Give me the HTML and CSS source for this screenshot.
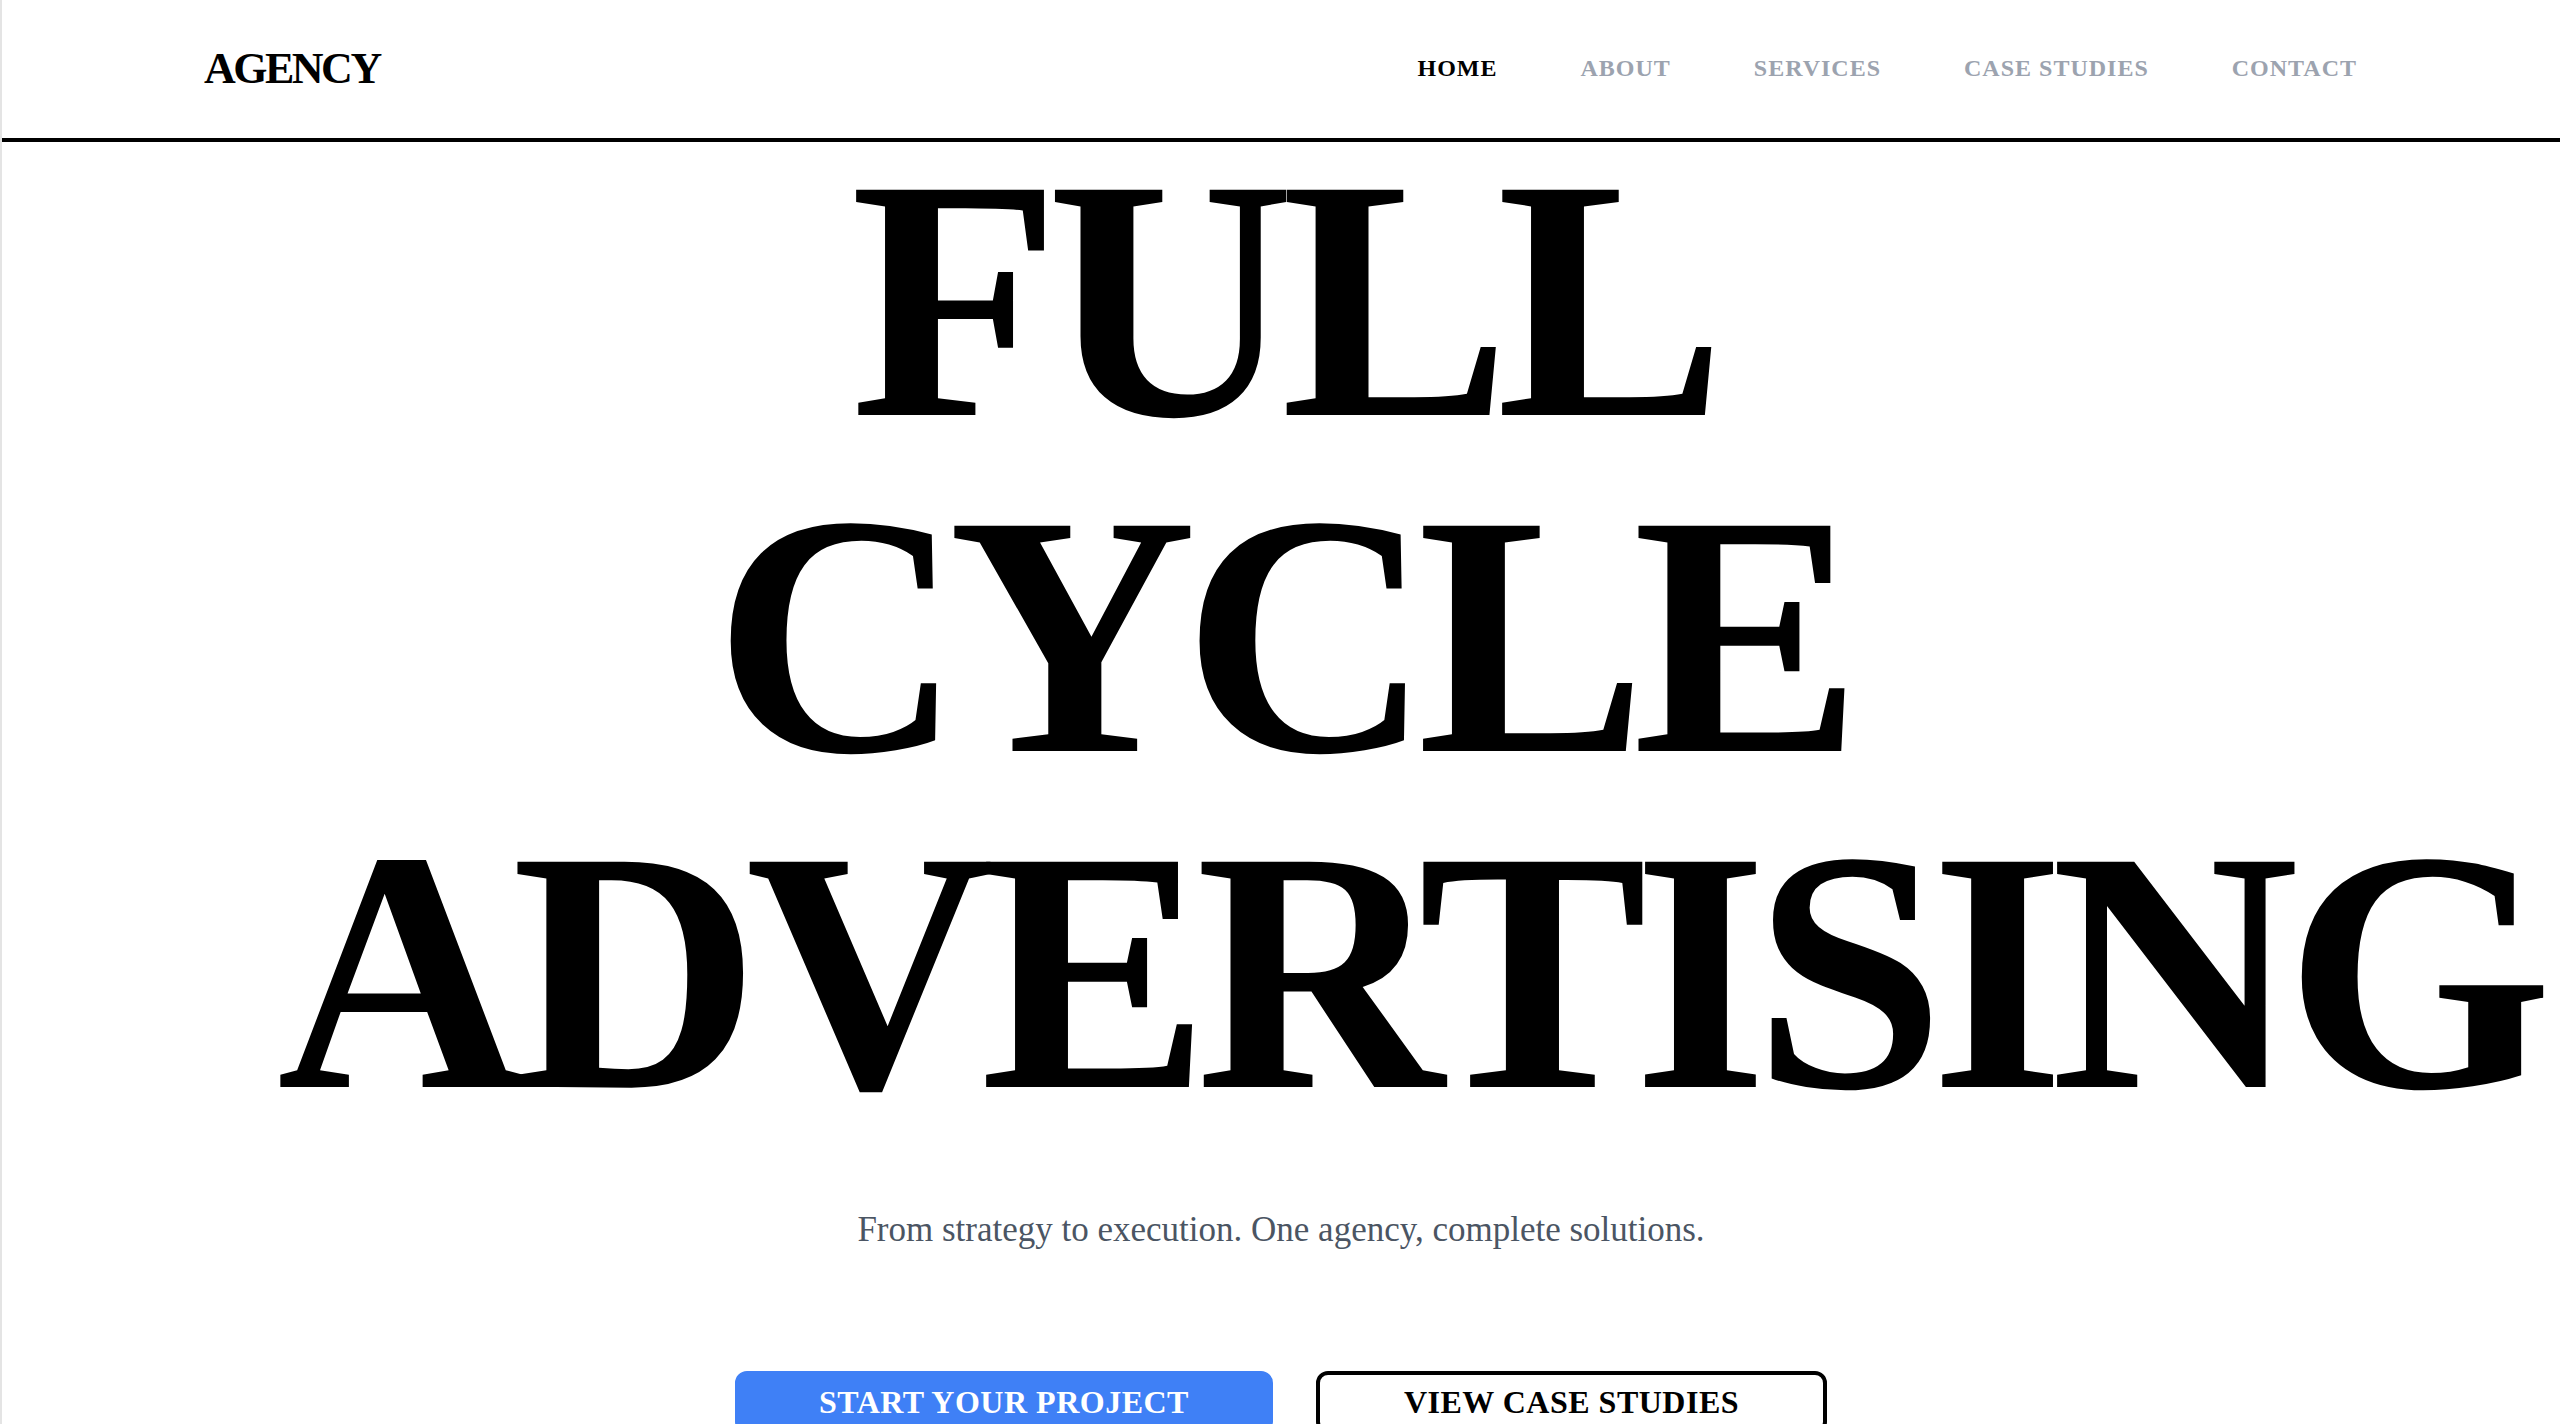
FILE: index.html
```html
<!DOCTYPE html>
<html lang="en">
<head>
<meta charset="utf-8">
<title>Agency</title>
<link rel="stylesheet" href="styles.css">
</head>
<body>
  <header class="site-header">
    <div class="logo">AGENCY</div>
    <nav class="main-nav">
      <a href="#" class="nav-link active">HOME</a>
      <a href="#" class="nav-link">ABOUT</a>
      <a href="#" class="nav-link">SERVICES</a>
      <a href="#" class="nav-link">CASE STUDIES</a>
      <a href="#" class="nav-link">CONTACT</a>
    </nav>
  </header>
  <main class="hero">
    <h1 class="hero-title">FULL CYCLE ADVERTISING</h1>
    <p class="hero-sub">From strategy to execution. One agency, complete solutions.</p>
    <div class="hero-actions">
      <a href="#" class="btn btn-primary">START YOUR PROJECT</a>
      <a href="#" class="btn btn-outline">VIEW CASE STUDIES</a>
    </div>
  </main>
</body>
</html>
```

FILE: styles.css
```css
html {
  scrollbar-width: none;
}
html::-webkit-scrollbar {
  display: none;
}
body {
  margin: 0;
  border-left: 2px solid #e4e4e4;
  background: #ffffff;
  color: #000000;
  font-family: "Liberation Serif", "Times New Roman", serif;
  min-height: 1424px;
}
.site-header {
  display: flex;
  align-items: center;
  justify-content: space-between;
  height: 132px;
  padding: 3px 203px 3px 202px;
  border-bottom: 4px solid #000000;
}
.logo {
  font-size: 44px;
  font-weight: 700;
  letter-spacing: -2.5px;
  line-height: 1.15;
}
.main-nav {
  display: flex;
  gap: 83px;
}
.nav-link {
  font-size: 24px;
  font-weight: 700;
  letter-spacing: 1px;
  color: #9ca3af;
  text-decoration: none;
  line-height: 1.15;
}
.nav-link.active {
  color: #000000;
}
.hero {
  max-width: 2008px;
  margin: 0 auto;
  text-align: center;
}
.hero-title {
  margin: -11px 0 0;
  font-size: 344px;
  font-weight: 700;
  letter-spacing: -14px;
  line-height: 336px;
}
.hero-sub {
  margin: 65px 0 0;
  font-size: 35px;
  line-height: 52px;
  color: #4b5563;
}
.hero-actions {
  display: flex;
  justify-content: center;
  gap: 43px;
  margin-top: 115px;
}
.btn {
  display: inline-block;
  font-size: 32px;
  font-weight: 700;
  letter-spacing: 0.5px;
  line-height: 35px;
  text-decoration: none;
  border: 4px solid transparent;
  border-radius: 12px;
}
.btn-primary {
  padding: 10px 80px;
  background: #3f80f6;
  border-color: #3f80f6;
  color: #ffffff;
}
.btn-outline {
  padding: 10px 84px;
  background: #ffffff;
  border-color: #000000;
  color: #000000;
}
```
